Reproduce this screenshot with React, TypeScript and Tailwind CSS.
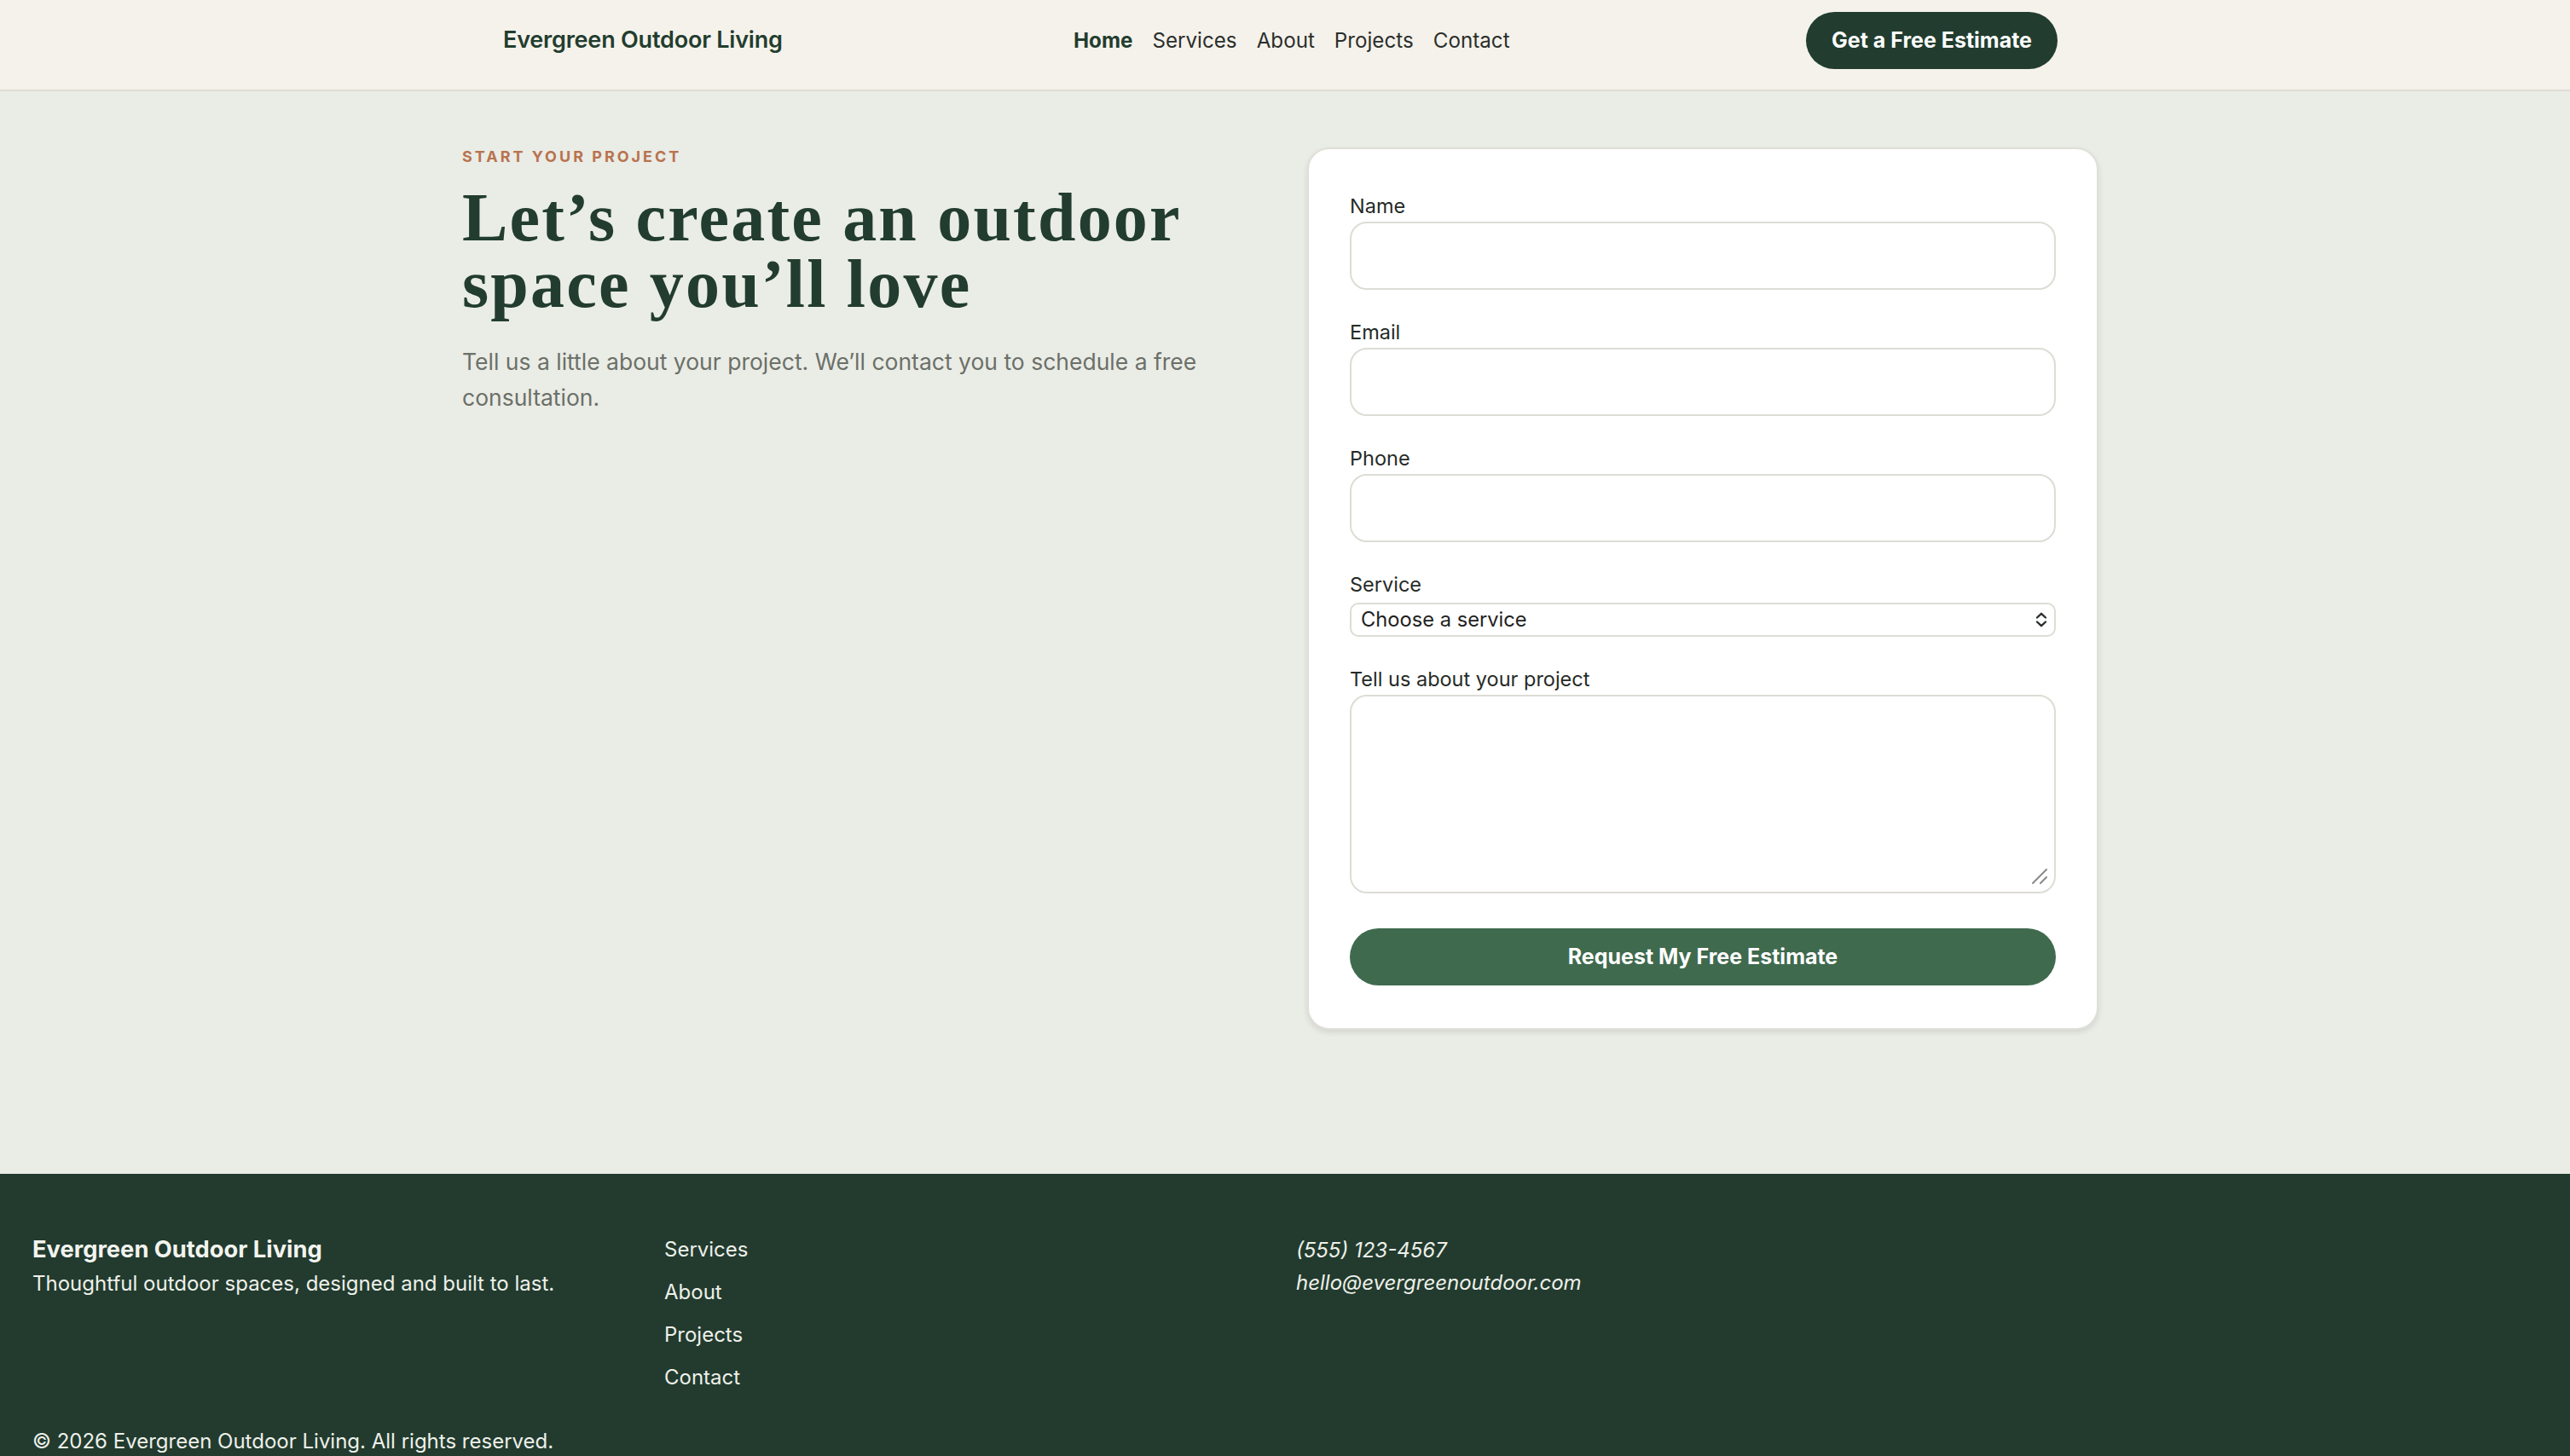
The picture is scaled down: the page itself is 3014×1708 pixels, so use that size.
import { useState } from "react";

const NAV = ["Home", "Services", "About", "Projects", "Contact"];
const FOOTER_LINKS = ["Services", "About", "Projects", "Contact"];

function Chevrons() {
  return (
    <svg viewBox="0 0 14 18" className="w-[14px] h-[18px]" fill="none">
      <path d="M2 6.5 7 1.8l5 4.7" stroke="#2a2f2b" strokeWidth="2.4" strokeLinecap="round" strokeLinejoin="round" />
      <path d="M2 11.5 7 16.2l5-4.7" stroke="#2a2f2b" strokeWidth="2.4" strokeLinecap="round" strokeLinejoin="round" />
    </svg>
  );
}

function Grip() {
  return (
    <svg viewBox="0 0 18 18" className="w-[18px] h-[18px]" fill="none">
      <path d="M1 17 17 1" stroke="#8a8a88" strokeWidth="2" strokeLinecap="round" />
      <path d="M10 17l7-7" stroke="#8a8a88" strokeWidth="2" strokeLinecap="round" />
    </svg>
  );
}

function Field({ label, children }: { label: string; children: React.ReactNode }) {
  return (
    <label className="flex flex-col">
      <span className="text-[23.5px] leading-[26px] mb-[5px] text-[#262b27]">{label}</span>
      {children}
    </label>
  );
}

export default function App() {
  const [service, setService] = useState("");

  return (
    <div className="min-h-screen bg-[#eaece6] font-['Inter',sans-serif] antialiased">
      {/* top bar */}
      <header className="h-[107px] bg-[#f5f2eb] border-b-2 border-[#dddcd5] pr-[11px] pt-[14px]">
        <div className="mx-auto w-[1919px] h-[67px] px-[48px] flex items-center">
          <div className="w-[669px]">
            <a href="#" className="text-[27px] font-semibold tracking-[-0.2px] text-[#223d2f]">
              Evergreen Outdoor Living
            </a>
          </div>
          <nav className="pt-[2px]">
            <ul className="flex items-center gap-[23px] text-[24.2px] text-[#2b2f2c]">
              {NAV.map((item) => (
                <li key={item}>
                  <a
                    href="#"
                    className={item === "Home" ? "font-bold text-[#223d2f]" : ""}
                  >
                    {item}
                  </a>
                </li>
              ))}
            </ul>
          </nav>
          <a
            href="#"
            className="ml-auto h-[67px] px-[30px] rounded-full bg-[#223d2f] text-white text-[25px] font-bold flex items-center"
          >
            Get a Free Estimate
          </a>
        </div>
      </header>

      <main className="pt-[66px] pb-[169px] pr-[11px]">
        <div className="mx-auto w-[1919px] grid grid-cols-2 gap-[63px] items-start">
          <div>
            <p className="text-[18px] leading-[22px] font-bold tracking-[3px] uppercase text-[#b8734f]">
              Start your project
            </p>
            <h1 className="mt-[21px] font-['Liberation_Serif',serif] font-bold text-[80px] leading-[78px] tracking-[2.2px] text-[#223d2f]">
              Let’s create an outdoor space you’ll love
            </h1>
            <p className="mt-[31px] text-[26.5px] leading-[42px] text-[#6b7068]">
              Tell us a little about your project. We’ll contact you to schedule a free consultation.
            </p>
          </div>

          <form
            className="bg-white rounded-[26px] border-2 border-[#e0dfd8] shadow-[0_3px_6px_rgba(40,50,40,0.12)] pt-[54px] px-[48px] pb-[50px] flex flex-col gap-[37px]"
            onSubmit={(e) => e.preventDefault()}
          >
            <Field label="Name">
              <input type="text" className="h-[80px] rounded-[20px] border-2 border-[#dddcd5] px-[20px] text-[22px] outline-none" />
            </Field>
            <Field label="Email">
              <input type="email" className="h-[80px] rounded-[20px] border-2 border-[#dddcd5] px-[20px] text-[22px] outline-none" />
            </Field>
            <Field label="Phone">
              <input type="tel" className="h-[80px] rounded-[20px] border-2 border-[#dddcd5] px-[20px] text-[22px] outline-none" />
            </Field>
            <Field label="Service">
              <div className="relative mt-[3px]">
                <select
                  value={service}
                  onChange={(e) => setService(e.target.value)}
                  className="w-full h-[40px] appearance-none rounded-[10px] border-2 border-[#dddcd5] bg-white pl-[11px] pr-[40px] text-[23.7px] text-[#1f231f] outline-none"
                >
                  <option value="">Choose a service</option>
                  <option value="design">Landscape Design</option>
                  <option value="patios">Patios &amp; Hardscaping</option>
                  <option value="decks">Decks &amp; Pergolas</option>
                  <option value="planting">Planting &amp; Gardens</option>
                </select>
                <span className="pointer-events-none absolute right-[10px] top-[11px]">
                  <Chevrons />
                </span>
              </div>
            </Field>
            <Field label="Tell us about your project">
              <div className="relative">
                <textarea className="block w-full h-[233px] resize-none rounded-[20px] border-2 border-[#dddcd5] p-[20px] text-[22px] outline-none" />
                <span className="pointer-events-none absolute right-[10px] bottom-[11px]">
                  <Grip />
                </span>
              </div>
            </Field>
            <button
              type="submit"
              className="mt-[4px] h-[67px] rounded-full bg-[#3f6a4e] text-white text-[25px] font-bold"
            >
              Request My Free Estimate
            </button>
          </form>
        </div>
      </main>

      <footer className="bg-[#223b2e] text-[#eef0ea] px-[38px] pt-[71px] pb-[40px]">
        <div className="grid grid-cols-4 gap-[26px]">
          <div>
            <p className="text-[27.3px] leading-[36px] font-bold text-[#f3f4ef]">Evergreen Outdoor Living</p>
            <p className="mt-[4px] text-[24px] leading-[36px]">Thoughtful outdoor spaces, designed and built to last.</p>
          </div>
          <ul className="flex flex-col gap-[14px] text-[24px] leading-[36px]">
            {FOOTER_LINKS.map((l) => (
              <li key={l}>
                <a href="#">{l}</a>
              </li>
            ))}
          </ul>
          <address className="text-[24px] leading-[38px] italic">
            <p>(555) 123-4567</p>
            <p>hello@evergreenoutdoor.com</p>
          </address>
        </div>
        <p className="mt-[39px] text-[24px] leading-[36px]">© 2026 Evergreen Outdoor Living. All rights reserved.</p>
      </footer>
    </div>
  );
}
